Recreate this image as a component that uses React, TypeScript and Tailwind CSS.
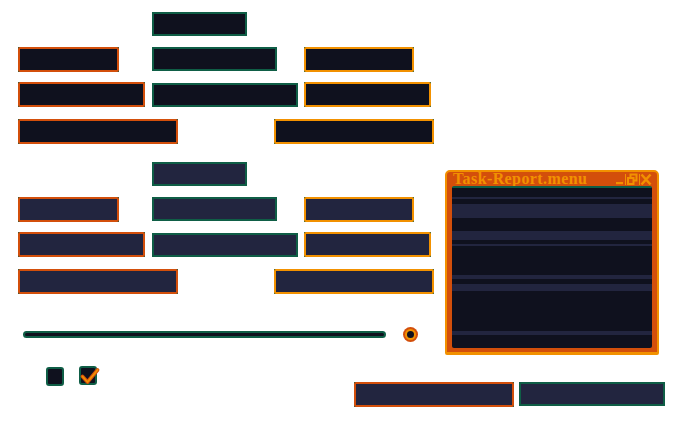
import React from 'react';

const C = {
  dark: '#0f111e',
  navy: '#22253f',
  orange: '#d34f0b',
  amber: '#f29100',
  green: '#0f5e46',
};

type Tone = 'orange' | 'amber' | 'green';

const borderCls: Record<Tone, string> = {
  orange: 'border-[#d34f0b]',
  amber: 'border-[#f29100]',
  green: 'border-[#0f5e46]',
};

function Field({ tone, w, h = 25, fill, className = '' }: { tone: Tone; w: number; h?: number; fill: 'dark' | 'navy'; className?: string }) {
  const bg = fill === 'dark' ? 'bg-[#0f111e]' : 'bg-[#22253f]';
  return (
    <div className={`shrink-0 bg-[#0f5e46] ${className}`} style={{ width: w, height: h }}>
      <div className={`w-full h-full rounded-[2px] border-2 ${borderCls[tone]} ${bg}`} />
    </div>
  );
}

function FieldBlock({ fill }: { fill: 'dark' | 'navy' }) {
  return (
    <div className="flex flex-col">
      <div className="flex pl-[152px]">
        <Field tone="green" w={95} h={24} fill={fill} />
      </div>
      <div className="flex items-start pl-[18px] mt-[11px]">
        <Field tone="orange" w={101} fill={fill} />
        <Field tone="green" w={125} h={24} fill={fill} className="ml-[33px]" />
        <Field tone="amber" w={110} fill={fill} className="ml-[27px]" />
      </div>
      <div className="flex items-start pl-[18px] mt-[10px]">
        <Field tone="orange" w={127} fill={fill} />
        <Field tone="green" w={146} h={24} fill={fill} className="ml-[7px] mt-[1px]" />
        <Field tone="amber" w={127} fill={fill} className="ml-[6px]" />
      </div>
      <div className="flex items-start pl-[18px] mt-[12px]">
        <Field tone="orange" w={160} fill={fill} />
        <Field tone="amber" w={160} fill={fill} className="ml-[96px]" />
      </div>
    </div>
  );
}

function WindowIcons() {
  return (
    <svg width="36" height="13" viewBox="0 0 36 13" className="block">
      {/* minimize */}
      <rect x="0" y="9" width="7" height="2.2" fill={C.amber} />
      <rect x="9" y="1" width="1" height="11" fill={C.amber} />
      {/* restore */}
      <path d="M14.5 4.5 V1.5 H20.5 V7.5 H17.5" fill="none" stroke={C.amber} strokeWidth="2" />
      <rect x="12" y="5" width="5.5" height="6" fill="none" stroke={C.amber} strokeWidth="2" />
      <rect x="23" y="1" width="1" height="11" fill={C.amber} />
      {/* close */}
      <path d="M25.5 1.5 L34.5 11.5 M34.5 1.5 L25.5 11.5" stroke={C.amber} strokeWidth="2.5" />
    </svg>
  );
}

function TaskWindow() {
  return (
    <div className="w-[214px] h-[185px] bg-[#d34f0b] border-2 border-b-[3px] border-[#f29100] rounded-t-[5px] rounded-b-[2px] flex flex-col">
      <div className="h-[14px] flex items-center justify-between pl-[6px] pr-[5px]">
        <span className="font-['Liberation_Serif',serif] font-bold text-[16px] leading-[14px] tracking-[0.4px] text-[#f29100] whitespace-nowrap">
          Task-Report.menu
        </span>
        <div className="mt-[1px]">
          <WindowIcons />
        </div>
      </div>
      <div className="mx-[5px] h-[162px] rounded-[2px] bg-[#0f111e] border-t-2 border-[#0f5e46] flex flex-col overflow-hidden">
        <div className="h-[2px] mt-[9px] bg-[#22253f]" />
        <div className="h-[14px] mt-[5px] bg-[#22253f]" />
        <div className="h-[9px] mt-[13px] bg-[#22253f]" />
        <div className="h-[2px] mt-[4px] bg-[#22253f]" />
        <div className="h-[4px] mt-[29px] bg-[#22253f]" />
        <div className="h-[7px] mt-[5px] bg-[#22253f]" />
        <div className="h-[4px] mt-[40px] bg-[#22253f]" />
      </div>
    </div>
  );
}

function Checkbox({ checked, className = '' }: { checked?: boolean; className?: string }) {
  return (
    <div className={`relative w-[18px] h-[19px] rounded-[3px] border-2 border-[#0f5e46] bg-[#0f111e] ${className}`}>
      {checked && (
        <svg width="22" height="22" viewBox="0 0 22 22" className="absolute -left-[2px] -top-[3px]">
          <path d="M3.5 11.5 L8.5 17 L18.5 5" fill="none" stroke={C.orange} strokeWidth="3.8" strokeLinecap="round" strokeLinejoin="round" />
          <path d="M3.5 11.5 L8.5 17 L18.5 5" fill="none" stroke={C.amber} strokeWidth="1.8" strokeLinecap="round" strokeLinejoin="round" />
        </svg>
      )}
    </div>
  );
}

export default function App() {
  return (
    <div className="w-[673px] h-[424px] bg-white overflow-hidden flex flex-col pt-[12px]">
      <FieldBlock fill="dark" />

      <div className="flex items-start mt-[18px]">
        <div className="w-[434px] flex flex-col">
          <FieldBlock fill="navy" />
          {/* slider */}
          <div className="flex items-center pl-[23px] mt-[33px]">
            <div className="w-[363px] h-[7px] rounded-full border-2 border-[#0f5e46] bg-[#0f111e]" />
            <div className="ml-[17px] w-[15px] h-[15px] rounded-full bg-[#d34f0b] p-[2px]">
              <div className="w-full h-full rounded-full bg-[#f29100] p-[2px]">
                <div className="w-full h-full rounded-full bg-[#0f111e]" />
              </div>
            </div>
          </div>
        </div>
        <div className="ml-[11px] mt-[8px]">
          <TaskWindow />
        </div>
      </div>

      <div className="flex items-start">
        <Checkbox className="ml-[46px] mt-[12px]" />
        <Checkbox checked className="ml-[15px] mt-[11px]" />
        <Field tone="orange" w={160} fill="navy" className="ml-[257px] mt-[27px]" />
        <Field tone="green" w={146} h={24} fill="navy" className="ml-[5px] mt-[27px]" />
      </div>
    </div>
  );
}
